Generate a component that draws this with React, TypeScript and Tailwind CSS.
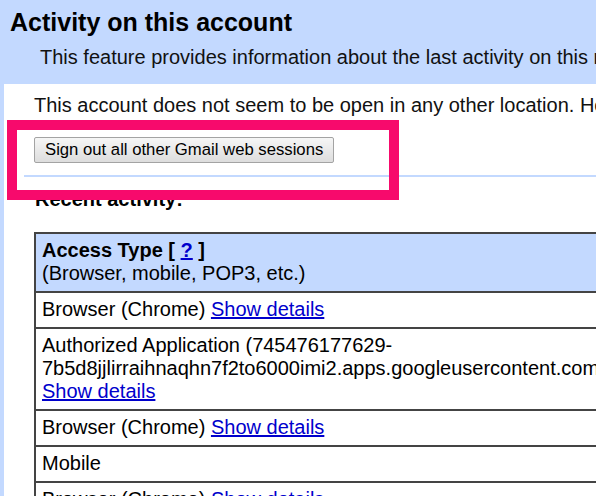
import type { ReactNode } from 'react';

type Row = {
  lines: ReactNode[]
}

function Details() {
  return <a href="#" className="text-[#0000cc] underline">Show details</a>;
}

const rows: Row[] = [
  { lines: [<>Browser (Chrome) <Details /></>] },
  {
    lines: [
      'Authorized Application (745476177629-',
      '7b5d8jjlirraihnaqhn7f2to6000imi2.apps.googleusercontent.com)',
      <Details />,
    ],
  },
  { lines: [<>Browser (Chrome) <Details /></>] },
  { lines: ['Mobile'] },
  { lines: [<>Browser (Chrome) <Details /></>] },
];

export default function App() {
  return (
    <div className="w-[596px] h-[496px] overflow-hidden bg-[#c3d9ff] text-black whitespace-nowrap font-['Liberation_Sans',Arial,sans-serif]">
      <h1 className="pl-[10px] pt-[7px] text-[25px] leading-[30px] font-bold">Activity on this account</h1>
      <p className="pl-[40px] mt-[8px] text-[20px] leading-[24px] text-[#111]">
        This feature provides information about the last activity on this mail account and any concurrent activity.
      </p>

      <div className="relative ml-[4px] mt-[15px] h-[420px] bg-white">
        <p className="pl-[30px] pt-[9px] text-[20px] leading-[24px] text-[#111]">
          This account does not seem to be open in any other location. However, there may be sessions that have not signed out.
        </p>

        <div className="pl-[30px] mt-[20px]">
          <button className="h-[26px] px-[10px] text-[16.7px] leading-[24px] text-black border border-[#a3a3a3] rounded-[2px] bg-gradient-to-b from-[#f6f6f6] to-[#dddddd]">
            Sign out all other Gmail web sessions
          </button>
        </div>

        <div className="ml-[20px] mt-[12px] h-[2px] bg-[#c3d9ff]" />

        <h2 className="pl-[31px] mt-[11px] text-[20px] leading-[23px] font-bold">Recent activity:</h2>

        <table className="ml-[30px] mt-[21px] w-[760px] border-collapse text-[20px] leading-[23px]">
          <tbody>
            <tr className="bg-[#c3d9ff]">
              <td className="border-2 border-[#444] pl-[6px] pt-[5px] pb-[6px] align-top">
                <span className="font-bold">
                  Access Type [ <a href="#" className="text-[#0000cc] underline">?</a> ]
                </span>
                <br />
                (Browser, mobile, POP3, etc.)
              </td>
            </tr>
            {rows.map((r, i) => (
              <tr key={i}>
                <td className="border-2 border-[#444] pl-[6px] pt-[5px] pb-[6px] align-top">
                  {r.lines.map((l, j) => (
                    <div key={j}>{l}</div>
                  ))}
                </td>
              </tr>
            ))}
          </tbody>
        </table>

        {/* highlight frame drawn over the sign-out button */}
        <div className="absolute left-[3px] top-[36px] w-[392px] h-[80px] border-[10px] border-[#f70a6c]" />
      </div>
    </div>
  );
}
